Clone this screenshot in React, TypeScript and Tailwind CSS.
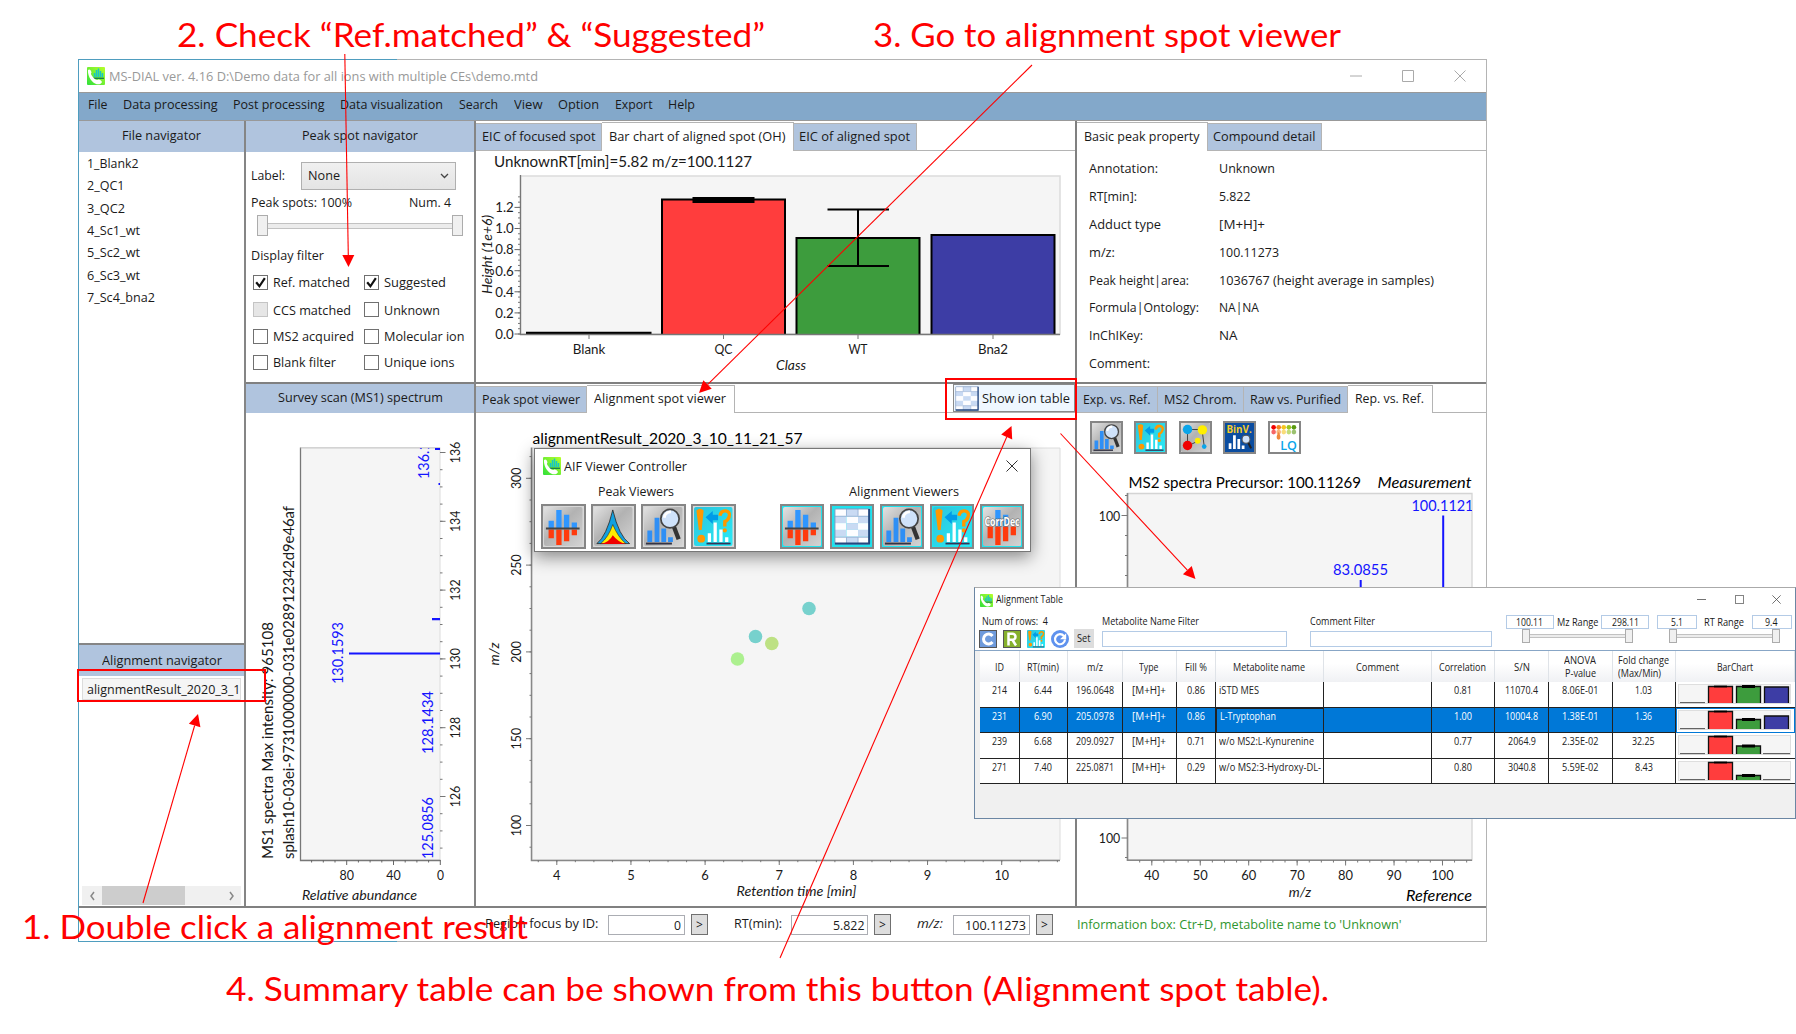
import { useLayoutEffect, useRef, type ReactNode } from 'react';

const UI = "font-['Open_Sans','Noto_Sans',sans-serif]";

/** Single line of text, condensed or widened to a given width. */
function T({ w, className = '', children }: { w: number; className?: string; children: ReactNode }) {
  const ref = useRef<HTMLSpanElement>(null);
  useLayoutEffect(() => {
    const el = ref.current;
    if (!el) return;
    el.style.transform = 'none';
    const natural = el.getBoundingClientRect().width;
    if (natural > 0) el.style.transform = `scaleX(${w / natural})`;
  }, [w, children]);
  return (
    <span className={`block shrink-0 ${className}`} style={{ width: w }}>
      <span ref={ref} className="inline-block origin-left whitespace-pre">
        {children}
      </span>
    </span>
  );
}

type STProps = {
  x: number;
  y: number;
  len: number;
  size?: number;
  rot?: boolean;
  italic?: boolean;
  fill?: string;
  anchor?: 'start' | 'middle' | 'end';
  children: ReactNode;
};

/** Chart label; y is the middle of its capitals. */
function ST({ x, y, len, size = 13.5, rot, italic, fill = '#1a1a1a', anchor = 'middle', children }: STProps) {
  return (
    <text
      x={x}
      y={y}
      dy=".36em"
      textLength={len}
      lengthAdjust="spacingAndGlyphs"
      fontSize={size}
      fontStyle={italic ? 'italic' : 'normal'}
      fill={fill}
      textAnchor={anchor}
      transform={rot ? `rotate(-90 ${x} ${y})` : undefined}
    >
      {children}
    </text>
  );
}

const range = (from: number, to: number, step: number) => {
  const out: number[] = [];
  for (let v = from; v <= to + 0.001; v += step) out.push(v);
  return out;
};

/* ---------- icons ---------- */

function Logo({ size }: { size: number }) {
  return (
    <svg width={size} height={size} viewBox="0 0 18 18" className="shrink-0">
      <defs>
        <linearGradient id="lg" x1="0" y1="1" x2="1" y2="0">
          <stop offset="0" stopColor="#2fe03a" />
          <stop offset="1" stopColor="#b8ff2a" />
        </linearGradient>
      </defs>
      <rect width="18" height="18" rx="1" fill="url(#lg)" />
      <path d="M7.5 10V6M9.5 10V3M11.5 10V1.5M13.5 10V4M15.5 10V6" stroke="#18c5c5" strokeWidth="1.5" />
      <path d="M6.5 11.3H17" stroke="#1a7f50" strokeWidth="1.4" />
      <path d="M1 3c1.500-1.500 3 0 3.500 2.500-1 1-.5 2 1 4s3 3.500 5 3.500c1.500-1 3.500 0 4.500 2-1 2.500-4 3-7 1.500C3.500 14 .5 8 1 3z" fill="#fff" />
    </svg>
  );
}

function Mirror() {
  return (
    <g>
      <path d="M7.500 14v8M15.500 3v19M23.500 8v14M31.500 16v6" stroke="#2f96ff" strokeWidth="5.500" />
      <path d="M7.500 23v9M15.500 23v16M23.500 23v12M31.500 23v6" stroke="#ff3a0c" strokeWidth="5.500" />
      <path d="M2 22h35" stroke="#444" strokeWidth="2" />
    </g>
  );
}

function Glass() {
  return (
    <g>
      <path d="M6 24v12M13.500 11v25M20.500 22v14M27.500 31v5" stroke="#2f8ff5" strokeWidth="5" />
      <path d="M2 37.500h27" stroke="#334" strokeWidth="2" />
      <path d="M31 20l5 13" stroke="#333" strokeWidth="4.500" />
      <circle cx="27" cy="12" r="9.500" fill="#cfe2fa" stroke="#444" strokeWidth="1.800" />
      <path d="M21 11a7 7 0 0 1 7-6" stroke="#fff" strokeWidth="3" fill="none" />
    </g>
  );
}

function Query() {
  return (
    <g>
      <path d="M2.500 3.500q4-3.500 7.500 0l-2 20h-3z" fill="#ff9800" />
      <circle cx="7.500" cy="32.500" r="4" fill="#ff9800" />
      <path d="M12 10.500l7.500-6.500v4H25v5.500h-5.500v4z" fill="#009be8" />
      <path d="M27 9q1-5.500 6-5 5 1 3.500 6-1 3.500-4.500 5v5" stroke="#ff9800" strokeWidth="3.500" fill="none" />
      <circle cx="32" cy="24" r="2.200" fill="#ff9800" />
      <path d="M16 27v9M22 16v20M28 23v13M34 31v5" stroke="#fff" strokeWidth="3.400" />
      <path d="M13 37.500h25" stroke="#335" strokeWidth="1.800" />
    </g>
  );
}

function Peaks() {
  return (
    <g>
      <path d="M3 37.500Q13 30 19.500 3 26 30 37 37.500z" fill="#12a0e0" stroke="#222" strokeWidth=".8" />
      <path d="M7 37.500Q15 31 19.500 18 25 31 33 37.500z" fill="#ffed00" stroke="#222" strokeWidth=".6" />
      <path d="M7 38Q16 36 19.500 29 25 36 33 38z" fill="#f00000" />
    </g>
  );
}

function Sheet() {
  const ys = [2, 9.5, 16.5, 23.5, 30.5, 38];
  const xs = [2, 14, 26, 38];
  const cells: ReactNode[] = [];
  for (let r = 0; r < 5; r++)
    for (let c = 0; c < 3; c++)
      cells.push(
        <rect
          key={`${r}-${c}`}
          x={xs[c]}
          y={ys[r]}
          width={xs[c + 1] - xs[c]}
          height={ys[r + 1] - ys[r]}
          fill={(r + c) % 2 ? '#c9daf3' : '#fdfdff'}
        />,
      );
  return (
    <g>
      {cells}
      <path d="M2 9.500h36M2 31h36M14 2v7M26 2v7M14 31v7M26 31v7" stroke="#9db4d6" strokeWidth="1" />
      <rect x="2" y="2" width="36" height="36" rx="1" fill="none" stroke="#7f98be" strokeWidth="1" />
      <path d="M37.500 2v35.500H2" fill="none" stroke="#24477f" strokeWidth="2" />
    </g>
  );
}

function Nodes() {
  return (
    <g>
      <path d="M9 9h20l3 23M9 9v23l14-7" stroke="#333" strokeWidth="1.200" fill="none" />
      <circle cx="9" cy="9" r="6.500" fill="#0aa5ea" />
      <circle cx="29.500" cy="9.500" r="6.500" fill="#ffef00" />
      <circle cx="9" cy="31" r="6.500" fill="#f00000" />
      <circle cx="23" cy="24.500" r="4" fill="#ffef00" />
      <circle cx="32" cy="32.500" r="3.200" fill="#0aa5ea" />
    </g>
  );
}

function BinV() {
  return (
    <g>
      <rect width="40" height="40" fill="#0b4da0" />
      <text x="2" y="14" fontSize="14" fontWeight="700" fill="#f5cc2a" textLength="35" lengthAdjust="spacingAndGlyphs">BinV.</text>
      <path d="M7 28v8M13 17v19M19 22v14M25 31v5" stroke="#fff" strokeWidth="3.800" />
      <path d="M32 27l4 8" stroke="#222" strokeWidth="3" />
      <circle cx="29" cy="22.500" r="5.500" fill="#cfe2fa" stroke="#555" strokeWidth="1.500" />
    </g>
  );
}

function LQ() {
  const cols = ['#f00000', '#f5831f', '#f5c51f', '#9ac51f', '#5a9a10'];
  return (
    <g>
      <rect width="40" height="40" fill="#fff" />
      {cols.map((c, i) => (
        <g key={c} fill={c}>
          <circle cx={5 + i * 7} cy="6" r="3.200" />
          <circle cx={5 + i * 7} cy="12.500" r="3.200" opacity=".6" />
        </g>
      ))}
      <path d="M12 12q-6 10 0 11 5-1 0-11z" fill="#f08a3c" />
      <text x="14" y="37" fontSize="17" fontWeight="600" fill="#0aa5ea" textLength="23" lengthAdjust="spacingAndGlyphs">LQ</text>
    </g>
  );
}

function CorrDec() {
  return (
    <g>
      <path d="M15.500 3v17M23.500 8v12" stroke="#2f96ff" strokeWidth="5.500" />
      <path d="M7.500 20v12M15.500 20v19M23.500 20v15M31.500 20v9" stroke="#ff3a0c" strokeWidth="5.500" />
      <text
        x="1.500"
        y="20"
        fontSize="12.500"
        fontWeight="700"
        fill="#fff"
        stroke="#666"
        strokeWidth="1.200"
        paintOrder="stroke"
        textLength="36.500"
        lengthAdjust="spacingAndGlyphs"
      >
        CorrDec
      </text>
    </g>
  );
}

function IconButton({ children, cyan, big }: { children: ReactNode; cyan?: boolean; big?: boolean }) {
  return (
    <span
      className={`flex shrink-0 items-center justify-center border-2 border-[#868686] ${big ? 'h-[45px] w-[44.500px]' : 'size-[33px]'} ${
        cyan ? 'bg-[#1fe3ee]' : 'bg-[#d8d8d8]'
      }`}
    >
      <svg viewBox="0 0 40 40" preserveAspectRatio="none" className={big ? 'h-[39px] w-[38.500px]' : 'size-[29px]'}>
        <defs>
          <linearGradient id="silver" x1="0" y1="0" x2="1" y2="1">
            <stop offset="0" stopColor="#e2e2e2" />
            <stop offset=".45" stopColor="#b2b2b2" />
            <stop offset="1" stopColor="#d4d4d4" />
          </linearGradient>
          <linearGradient id="aqua" x1="0" y1="0" x2="1" y2="1">
            <stop offset="0" stopColor="#2cc4dc" />
            <stop offset="1" stopColor="#2aeaf6" />
          </linearGradient>
        </defs>
        {children}
      </svg>
    </span>
  );
}

const Silver = () => <rect width="40" height="40" rx="2" fill="url(#silver)" />;
const Aqua = () => <rect width="40" height="40" rx="2" fill="url(#aqua)" />;

/* ---------- pieces ---------- */

function PaneHeader({ w, h, low, children }: { w: number; h: number; low?: boolean; children: string }) {
  return (
    <div className={`flex shrink-0 items-center justify-center bg-[#b0c4de] ${low ? 'pb-[2px]' : 'pb-[4px]'}`} style={{ height: h }}>
      <T w={w}>{children}</T>
    </div>
  );
}

type TabDef = { label: string; w: number; box: number; active?: boolean };

function Tabs({ tabs, children, h }: { tabs: TabDef[]; children?: ReactNode; h: number }) {
  return (
    <div className="flex shrink-0 items-end border-b border-[#b4b4b4]" style={{ height: h }}>
      {tabs.map((t) => (
        <div
          key={t.label}
          className={`flex items-center justify-center border-r border-t border-[#b4b4b4] ${
            t.active ? '-mb-px h-full bg-white pb-[3px]' : 'h-[calc(100%-2px)] bg-[#b0c4de] pb-[2px]'
          }`}
          style={{ width: t.box }}
        >
          <T w={t.w}>{t.label}</T>
        </div>
      ))}
      {children}
    </div>
  );
}

function Check({ label, w, on, off }: { label: string; w: number; on?: boolean; off?: boolean }) {
  return (
    <div className="flex items-center gap-[5.500px]">
      <span className={`flex size-[15px] shrink-0 items-center justify-center border ${off ? 'border-[#c4c4c4] bg-[#e6e6e6]' : 'border-[#707070] bg-white'}`}>
        {on && (
          <svg viewBox="0 0 12 12" className="size-[13px]">
            <path d="M2 5.800l3 3.700L10 2" fill="none" stroke="#111" strokeWidth="2" />
          </svg>
        )}
      </span>
      <T w={w}>{label}</T>
    </div>
  );
}

function Slider({ className, small }: { className: string; small?: boolean }) {
  const thumb = small ? 'h-[14px] w-[8px]' : 'h-[21px] w-[11px]';
  return (
    <div className={`flex items-center ${className}`}>
      <span className={`${thumb} shrink-0 border border-[#acacac] bg-[#f0f0f0]`} />
      <span className={`${small ? 'h-[4px]' : 'h-[6px]'} flex-1 border-y border-[#c2c2c2] bg-[#ececec]`} />
      <span className={`${thumb} shrink-0 border border-[#acacac] bg-[#f0f0f0]`} />
    </div>
  );
}

function WindowButtons({ gap, size, color }: { gap: number; size: number; color: string }) {
  return (
    <div className="flex items-center" style={{ gap }}>
      {['M0 6h12', 'M.5 .5h11v11h-11z', 'M.5 .5l11 11M11.500 .5l-11 11'].map((d) => (
        <svg key={d} width={size} height={size} viewBox="0 0 12 12" fill="none" stroke={color}>
          <path d={d} />
        </svg>
      ))}
    </div>
  );
}

/* ---------- charts ---------- */

const chart = "block shrink-0 font-['Lato',sans-serif]";

function BarChart() {
  const bars: [number, number, string][] = [
    [661, 199.5, '#ff3d3d'],
    [795.5, 238, '#3d9c3d'],
    [930.5, 235, '#3d3da5'],
  ];
  return (
    <svg width="599" height="231" viewBox="476 151 599 231" className={chart}>
      <ST x={494} y={161.500} len={258} size={15.500} anchor="start">UnknownRT[min]=5.82 m/z=100.1127</ST>
      <path d="M520.500 176H1060V334H520.500z" fill="#f5f5f5" stroke="#dcdcdc" strokeWidth="1.500" />
      {bars.map(([x, y, c]) => (
        <path key={x} d={`M${x + 1} 334V${y}H${x + 124}V334`} fill={c} stroke="#000" strokeWidth="2" />
      ))}
      <path d="M526 333H651.500" stroke="#000" strokeWidth="2.500" />
      <path d="M692.500 200H754.500" stroke="#000" strokeWidth="6" />
      <path d="M827.500 209.500H889M827.500 266H889M858 209.500V266" stroke="#000" strokeWidth="2" />
      <path d="M520.500 175V334.500H1060" fill="none" stroke="#777" strokeWidth="1.300" />
      {range(0, 6, 1).map((i) => (
        <g key={i}>
          <path d={`M514.500 ${334 - i * 21.1}h6`} stroke="#666" />
          <ST x={504.500} y={334 - i * 21.1} len={18.500}>{(i * 0.2).toFixed(1)}</ST>
        </g>
      ))}
      {range(0, 26, 1).map((i) => (
        <path key={i} d={`M518 ${334 - i * 5.275}h2.500`} stroke="#777" />
      ))}
      <ST x={486.500} y={254.500} len={79} rot italic size={14}>Height (1e+6)</ST>
      {([[589, 'Blank', 32.5], [723.5, 'QC', 18], [858, 'WT', 19], [993, 'Bna2', 30]] as [number, string, number][]).map(([x, l, w]) => (
        <g key={l}>
          <path d={`M${x} 334v5`} stroke="#777" />
          <ST x={x} y={349} len={w}>{l}</ST>
        </g>
      ))}
      <ST x={791} y={365.500} len={30} italic>Class</ST>
    </svg>
  );
}

function SurveyChart() {
  return (
    <svg width="228" height="493" viewBox="246 413 228 493" className={chart}>
      <clipPath id="sc"><rect x="300" y="448" width="140" height="412" /></clipPath>
      <rect x="300.500" y="448" width="139.500" height="412" fill="#f5f5f5" stroke="#dcdcdc" />
      <path d="M300.500 447.500V860.500H440.500" fill="none" stroke="#777" strokeWidth="1.300" />
      <path d="M300.500 447.800H440" stroke="#c8c8c8" />
      <ST x={267.500} y={740.500} len={237} size={15.500} rot>MS1 spectra Max intensity: 965108</ST>
      <ST x={288} y={682.500} len={353} size={15.500} rot>splash10-03ei-9731000000-031e028912342d9e46af</ST>
      <g clipPath="url(#sc)">
        <ST x={423.500} y={479} len={62} size={15} rot anchor="start" fill="#1414ff">136.1121</ST>
        <path d="M435 449H440M349 653.500H440M432 619.200H440M438.500 484h2" stroke="#1414ff" strokeWidth="2.200" />
      </g>
      <ST x={337.500} y={653} len={62} size={15} rot fill="#1414ff">130.1593</ST>
      <ST x={427.500} y={722.500} len={63} size={15} rot fill="#1414ff">128.1434</ST>
      <ST x={427.500} y={828} len={62} size={15} rot fill="#1414ff">125.0856</ST>
      {range(0, 5, 1).map((i) => (
        <g key={i}>
          <path d={`M440 ${452.5 + i * 68.8}h5.500`} stroke="#777" />
          <ST x={455} y={452.5 + i * 68.8} len={21.500} rot>{136 - i * 2}</ST>
        </g>
      ))}
      {range(0, 23, 1).map((i) => (
        <path key={i} d={`M440 ${452.5 + i * 17.2}h2.500`} stroke="#777" />
      ))}
      {range(0, 11, 1).map((i) => (
        <path key={i} d={`M${440.3 - i * 11.7} 860v${i % 4 ? 2.5 : 5}`} stroke="#666" />
      ))}
      <ST x={346.800} y={875.500} len={14.500}>80</ST>
      <ST x={393.500} y={875.500} len={14.500}>40</ST>
      <ST x={440.500} y={875.500} len={7}>0</ST>
      <ST x={359.500} y={895.500} len={115} italic>Relative abundance</ST>
    </svg>
  );
}

function ScatterChart() {
  return (
    <svg width="599" height="493" viewBox="476 413 599 493" className={chart}>
      <path d="M532 448H1060V860H532z" fill="#f5f5f5" stroke="#dcdcdc" />
      <path d="M531.500 447.500V860.500H1060" fill="none" stroke="#888" strokeWidth="1.500" />
      <ST x={532.500} y={438.500} len={270} size={15.500} anchor="start" fill="#000">alignmentResult_2020_3_10_11_21_57</ST>
      {range(0, 4, 1).map((i) => (
        <g key={i}>
          <path d={`M526 ${825.5 - i * 86.8}h5.500`} stroke="#777" />
          <ST x={516} y={825.5 - i * 86.8} len={21.500} rot>{100 + i * 50}</ST>
        </g>
      ))}
      {range(-1, 17, 1).map((i) => (
        <path key={i} d={`M529.500 ${825.5 - i * 21.7}h2`} stroke="#777" />
      ))}
      {range(0, 6, 1).map((i) => (
        <g key={i}>
          <path d={`M${556.8 + i * 74.15} 860v5`} stroke="#777" />
          <ST x={556.8 + i * 74.15} y={875} len={i === 6 ? 14.5 : 7.5}>{4 + i}</ST>
        </g>
      ))}
      {range(-1, 27, 1).map((i) => (
        <path key={i} d={`M${556.8 + i * 18.54} 860v2.200`} stroke="#777" />
      ))}
      <ST x={494.500} y={654} len={23} rot italic>m/z</ST>
      <ST x={796.500} y={891.500} len={120} italic>Retention time [min]</ST>
      <circle cx="809" cy="608.500" r="6.800" fill="#77d1cd" />
      <circle cx="755.500" cy="636.500" r="6.800" fill="#77d1cd" />
      <circle cx="771.800" cy="643.500" r="6.800" fill="#bde183" />
      <circle cx="737.500" cy="659" r="6.800" fill="#acf08f" />
    </svg>
  );
}

function Ms2Chart() {
  return (
    <svg width="409" height="446" viewBox="1077 460 409 446" className={chart}>
      <clipPath id="ms2"><rect x="1127" y="493" width="345" height="367" /></clipPath>
      <path d="M1127.500 493.500H1472V860H1127.500z" fill="#f5f5f5" stroke="#d4d4d4" strokeWidth="1.300" />
      <path d="M1127.500 493V860.300H1472" fill="none" stroke="#888" strokeWidth="1.600" />
      <ST x={1128.500} y={482.500} len={232.500} size={15.500} anchor="start" fill="#000">MS2 spectra Precursor: 100.11269</ST>
      <ST x={1377.500} y={482.500} len={94} size={15.500} anchor="start" italic fill="#000">Measurement</ST>
      <ST x={1109.500} y={516} len={21.500}>100</ST>
      <ST x={1109.500} y={838} len={21.500}>100</ST>
      <path d="M1121.500 515.500h6M1125 495.500h2.500M1125 535.500h2.500M1125 555.500h2.500M1125 575.500h2.500M1121.500 838h6M1125 857.500h2.500" stroke="#777" />
      <g clipPath="url(#ms2)">
        <ST x={1411.500} y={506} len={62} size={15} anchor="start" fill="#1414ff">100.1121</ST>
      </g>
      <ST x={1360.500} y={570} len={55} size={15} fill="#1414ff">83.0855</ST>
      <path d="M1443.200 515.500V600M1360.700 580V600" stroke="#1414ff" strokeWidth="2" />
      {range(0, 6, 1).map((i) => (
        <g key={i}>
          <path d={`M${1151.8 + i * 48.45} 860v5.500`} stroke="#777" />
          <ST x={1151.8 + i * 48.45} y={875.500} len={i === 6 ? 22 : 15}>{40 + i * 10}</ST>
        </g>
      ))}
      {range(-1, 26, 1).map((i) => (
        <path key={i} d={`M${1151.8 + i * 12.11} 860v2.500`} stroke="#777" />
      ))}
      <ST x={1300} y={892} len={22.500} italic>m/z</ST>
      <ST x={1406} y={895.500} len={66} size={15.500} anchor="start" italic fill="#000">Reference</ST>
    </svg>
  );
}

/* ---------- panes ---------- */

const menu: [string, number][] = [
  ['File', 19.5], ['Data processing', 94.5], ['Post processing', 91.5], ['Data visualization', 103], ['Search', 39],
  ['View', 28.5], ['Option', 41], ['Export', 37.5], ['Help', 27],
];

const files: [string, number][] = [
  ['1_Blank2', 51.5], ['2_QC1', 37.5], ['3_QC2', 38], ['4_Sc1_wt', 53], ['5_Sc2_wt', 53], ['6_Sc3_wt', 53], ['7_Sc4_bna2', 68],
];

const props: [string, number, string, number][] = [
  ['Annotation:', 69, 'Unknown', 56], ['RT[min]:', 48, '5.822', 31.5], ['Adduct type', 72, '[M+H]+', 46], ['m/z:', 26, '100.11273', 60],
  ['Peak height|area:', 100, '1036767 (height average in samples)', 215], ['Formula|Ontology:', 110, 'NA|NA', 40],
  ['InChIKey:', 54, 'NA', 18.5], ['Comment:', 61, '', 0],
];

function Chevron({ d }: { d: string }) {
  return (
    <svg width="7" height="10" viewBox="0 0 7 10" fill="none" stroke="currentColor" strokeWidth="1.500"><path d={d} /></svg>
  );
}

function LeftPane() {
  return (
    <div className="flex w-[165px] shrink-0 flex-col">
      <PaneHeader w={79} h={31}>File navigator</PaneHeader>
      <div className="flex flex-1 flex-col pl-[8px]">
        {files.map(([f, w]) => (
          <div key={f} className="flex h-[22.300px] items-center"><T w={w}>{f}</T></div>
        ))}
      </div>
      <div className="h-[2px] shrink-0 bg-[#858585]" />
      <PaneHeader w={120} h={31} low>Alignment navigator</PaneHeader>
      <div className="flex h-[230px] shrink-0 flex-col px-[3px] pb-px pt-[2px]">
        <div className="flex h-[22px] items-center overflow-hidden border border-[#dcdcdc] bg-[#f5f5f5] pl-[4px]">
          <T w={153.500}>alignmentResult_2020_3_1</T>
        </div>
        <div className="mt-auto flex h-[19px] bg-[#f0f0f0] text-[#888]">
          <span className="flex w-[20px] items-center justify-center"><Chevron d="M5 1L2 5l3 4" /></span>
          <span className="w-[83px] bg-[#cdcdcd]" />
          <span className="ml-auto flex w-[20px] items-center justify-center"><Chevron d="M2 1l3 4-3 4" /></span>
        </div>
      </div>
    </div>
  );
}

function FilterPane() {
  return (
    <div className="flex w-[228px] shrink-0 flex-col">
      <PaneHeader w={116} h={31}>Peak spot navigator</PaneHeader>
      <div className="flex h-[230px] shrink-0 flex-col pl-[5px] pt-[9.500px]">
        <div className="flex h-[28px] items-center">
          <T w={34} className="pb-px">Label:</T>
          <div className="ml-[16px] flex h-[28px] w-[155px] items-center justify-between border border-[#b0b0b0] bg-linear-to-b from-[#f0f0f0] to-[#e4e4e4] pl-[6px] pr-[6px]">
            <T w={32} className="pb-px">None</T>
            <svg width="9" height="6" viewBox="0 0 9 6" fill="none" stroke="#444" strokeWidth="1.300"><path d="M1 1l3.500 3.500L8 1" /></svg>
          </div>
        </div>
        <div className="mt-[2.500px] flex h-[20px] items-center justify-between pr-[23px]">
          <T w={101}>Peak spots: 100%</T>
          <T w={42}>Num. 4</T>
        </div>
        <Slider className="ml-[6px] mt-[3px] w-[206px]" />
        <div className="mt-[9px] flex h-[20px] items-center"><T w={73}>Display filter</T></div>
        <div className="mt-[3px] grid h-[108px] grid-cols-[111px_1fr] grid-rows-[28px_27px_26px_26px] items-center pl-[1.500px]">
          <Check label="Ref. matched" w={77} on />
          <Check label="Suggested" w={62} on />
          <Check label="CCS matched" w={78} off />
          <Check label="Unknown" w={56} />
          <Check label="MS2 acquired" w={81} />
          <Check label="Molecular ion" w={80.5} />
          <Check label="Blank filter" w={63} />
          <Check label="Unique ions" w={70.5} />
        </div>
      </div>
      <div className="h-[2px] shrink-0 bg-[#808080]" />
      <PaneHeader w={165} h={29}>Survey scan (MS1) spectrum</PaneHeader>
      <SurveyChart />
    </div>
  );
}

function CenterPane() {
  return (
    <div className="flex w-[599px] shrink-0 flex-col">
      <Tabs
        h={30}
        tabs={[
          { label: 'EIC of focused spot', w: 113.5, box: 126 },
          { label: 'Bar chart of aligned spot (OH)', w: 176.5, box: 192, active: true },
          { label: 'EIC of aligned spot', w: 111, box: 122.5 },
        ]}
      />
      <BarChart />
      <div className="h-[2px] shrink-0 bg-[#808080]" />
      <Tabs
        h={29}
        tabs={[
          { label: 'Peak spot viewer', w: 98, box: 110.5 },
          { label: 'Alignment spot viewer', w: 132, box: 148.5, active: true },
        ]}
      >
        <div className="ml-auto flex h-[28px] w-[122px] items-center gap-[2.500px] border border-[#8a8a8a] bg-[#eff7ff] pl-px">
          <svg width="24" height="25" viewBox="1 1 38 38" preserveAspectRatio="none"><Sheet /></svg>
          <T w={88}>Show ion table</T>
        </div>
      </Tabs>
      <ScatterChart />
    </div>
  );
}

function RightPane() {
  return (
    <div className="flex w-[409px] shrink-0 flex-col">
      <Tabs
        h={30}
        tabs={[
          { label: 'Basic peak property', w: 115.5, box: 130.5, active: true },
          { label: 'Compound detail', w: 102.5, box: 114 },
        ]}
      />
      <div className="flex h-[231px] shrink-0 flex-col pl-[12px] pt-[3px]">
        {props.map(([l, lw, v, vw]) => (
          <div key={l} className="grid h-[27.900px] grid-cols-[130px_1fr] items-center">
            <T w={lw}>{l}</T>
            {v && <T w={vw}>{v}</T>}
          </div>
        ))}
      </div>
      <div className="h-[2px] shrink-0 bg-[#808080]" />
      <Tabs
        h={29}
        tabs={[
          { label: 'Exp. vs. Ref.', w: 67.5, box: 81 },
          { label: 'MS2 Chrom.', w: 72.5, box: 86 },
          { label: 'Raw vs. Purified', w: 91, box: 103.5 },
          { label: 'Rep. vs. Ref.', w: 69, box: 85.5, active: true },
        ]}
      />
      <div className="flex h-[47px] shrink-0 gap-[11.500px] pl-[12.500px] pt-[8px]">
        <IconButton><Silver /><Glass /></IconButton>
        <IconButton cyan><Aqua /><Query /></IconButton>
        <IconButton><Silver /><Nodes /></IconButton>
        <IconButton><BinV /></IconButton>
        <IconButton><LQ /></IconButton>
      </div>
      <Ms2Chart />
    </div>
  );
}

function Field({ value, w }: { value: string; w: number }) {
  return (
    <>
      <span className="flex h-[20px] w-[77.500px] items-center justify-end border border-[#abadb3] bg-white pr-[3px] pt-px">
        <T w={w}>{value}</T>
      </span>
      <span className="ml-[6px] flex h-[21px] w-[17px] items-center justify-center border border-[#707070] bg-[#dddddd] text-[12px]">&gt;</span>
    </>
  );
}

function MainWindow() {
  return (
    <div className="absolute left-[78px] top-[59px] flex h-[883px] w-[1409px] flex-col border border-[#b4b4b4] border-l-[#4f9dbf] bg-white">
      <span className="absolute -left-px -top-px h-px w-[319px] bg-[#4f9dbf]" />
      <span className="absolute -bottom-px -left-px h-px w-[319px] bg-[#4f9dbf]" />
      <div className="flex h-[32px] shrink-0 items-center pl-[8px] pr-[20px] text-[#999]">
        <Logo size={18} />
        <T w={429} className="ml-[3.500px]">MS-DIAL ver. 4.16 D:\Demo data for all ions with multiple CEs\demo.mtd</T>
        <div className="ml-auto"><WindowButtons gap={40} size={12} color="#aaa" /></div>
      </div>
      <div className="flex h-[29px] shrink-0 items-center gap-[15.800px] border-y border-[#999] bg-[#83a8ca] pb-[6px] pl-[8.500px]">
        {menu.map(([m, w]) => <T key={m} w={w}>{m}</T>)}
      </div>
      <div className="flex h-[785px] shrink-0">
        <LeftPane />
        <div className="w-[2px] bg-[#858585]" />
        <FilterPane />
        <div className="w-[2px] bg-[#858585]" />
        <CenterPane />
        <div className="w-[2px] bg-[#808080]" />
        <RightPane />
      </div>
      <div className="h-[2px] shrink-0 bg-[#808080]" />
      <div className="flex flex-1 items-center pl-[406px]">
        <T w={113.5} className="pb-[3px]">Region focus by ID:</T>
        <span className="w-[9px]" />
        <Field value="0" w={7} />
        <T w={48} className="ml-[25.500px] pb-[3px]">RT(min):</T>
        <span className="w-[9px]" />
        <Field value="5.822" w={31.5} />
        <T w={26} className="ml-[26px] pb-[3px] italic">m/z:</T>
        <span className="w-[9.500px]" />
        <Field value="100.11273" w={61} />
        <T w={324.5} className="ml-[23.500px] pb-px text-[#2f962f]">Information box: Ctr+D, metabolite name to 'Unknown'</T>
      </div>
    </div>
  );
}

function ControllerDialog() {
  return (
    <div className="absolute left-[534px] top-[448px] flex h-[104px] w-[497px] flex-col border border-[#777] bg-white shadow-[0_5px_16px_rgba(0,0,0,0.45)]">
      <div className="flex h-[34px] items-center pl-[8px] pr-[12px]">
        <Logo size={18} />
        <T w={123} className="ml-[3px]">AIF Viewer Controller</T>
        <svg className="ml-auto" width="12" height="12" viewBox="0 0 12 12" stroke="#333"><path d="M.5 .5l11 11M11.500 .5l-11 11" /></svg>
      </div>
      <div className="flex pl-[6px]">
        <div className="flex w-[238.500px] flex-col">
          <T w={76} className="ml-[57px] -mt-px h-[22px]">Peak Viewers</T>
          <div className="flex gap-[5.500px]">
            <IconButton big><Silver /><Mirror /></IconButton>
            <IconButton big><Silver /><Peaks /></IconButton>
            <IconButton big><Silver /><Glass /></IconButton>
            <IconButton big><Aqua /><Query /></IconButton>
          </div>
        </div>
        <div className="flex flex-col">
          <T w={110} className="ml-[69px] -mt-px h-[22px]">Alignment Viewers</T>
          <div className="flex gap-[5.600px]">
            <IconButton big cyan><Silver /><Mirror /></IconButton>
            <IconButton big cyan><Sheet /></IconButton>
            <IconButton big cyan><Silver /><Glass /></IconButton>
            <IconButton big cyan><Aqua /><Query /></IconButton>
            <IconButton big cyan><Silver /><CorrDec /></IconButton>
          </div>
        </div>
      </div>
    </div>
  );
}

/* ---------- alignment table ---------- */

const gridCols = 'grid-cols-[39.500px_48px_55px_54px_39px_108px_108px_63.500px_54px_63.500px_63px_119px]';

const heads: [string, number][][] = [
  [['ID', 9]], [['RT(min)', 32]], [['m/z', 16]], [['Type', 19.5]], [['Fill %', 22]], [['Metabolite name', 72]], [['Comment', 43]],
  [['Correlation', 47]], [['S/N', 16]], [['ANOVA', 32], ['P-value', 31]], [['Fold change', 51], ['(Max/Min)', 43]], [['BarChart', 36]],
];

const widths = [15, 18, 38, 34, 18, 0, 0, 18, 0, 36.5, 0];

type Row = { cells: string[]; nameW: number; snW: number; foldW: number; bars: [number, number, number]; sel?: boolean };
const rows: Row[] = [
  { cells: ['214', '6.44', '196.0648', '[M+H]+', '0.86', 'iSTD MES', '', '0.81', '11070.4', '8.06E-01', '1.03'], nameW: 40, snW: 33, foldW: 17, bars: [16.5, 16.5, 16] },
  { cells: ['231', '6.90', '205.0978', '[M+H]+', '0.86', 'L-Tryptophan', '', '1.00', '10004.8', '1.38E-01', '1.36'], nameW: 56, snW: 33, foldW: 17, bars: [17.5, 9.5, 13], sel: true },
  { cells: ['239', '6.68', '209.0927', '[M+H]+', '0.71', 'w/o MS2:L-Kynurenine', '', '0.77', '2064.9', '2.35E-02', '32.25'], nameW: 95, snW: 28, foldW: 22.5, bars: [17.5, 8, 0] },
  { cells: ['271', '7.40', '225.0871', '[M+H]+', '0.29', 'w/o MS2:3-Hydroxy-DL-', '', '0.80', '3040.8', '5.59E-02', '8.43'], nameW: 102, snW: 28, foldW: 18, bars: [17.5, 4.5, 0] },
];

function MiniBars({ bars }: { bars: [number, number, number] }) {
  const fills = ['#ff3d3d', '#3d9c3d', '#3d3da5'];
  return (
    <svg width="114" height="20" viewBox="0 0 114 20" className="block">
      <rect x=".5" y=".5" width="112" height="19" fill="#f5f5f5" stroke="#dedede" />
      <path d="M2 18.600h25" stroke="#555" />
      {bars.map((h, i) =>
        h > 0 ? (
          <path key={i} d={`M${30.5 + i * 28} 19V${19 - h}H${54.5 + i * 28}V19`} fill={fills[i]} stroke="#111" strokeWidth="1.300" />
        ) : (
          <path key={i} d={`M${29 + i * 28} 18.600h27`} stroke="#555" />
        ),
      )}
      {bars.slice(0, 2).map((h, i) => (
        <path key={i} d={`M${36 + i * 28} ${19 - h}h13`} stroke="#000" strokeWidth={i ? 3 : 1.8} />
      ))}
    </svg>
  );
}

function Box({ w, box, children }: { w: number; box: number; children: string }) {
  return (
    <span className="flex h-[14px] shrink-0 items-center justify-center border border-[#b4cbe6]" style={{ width: box }}>
      <T w={w}>{children}</T>
    </span>
  );
}

function TableWindow() {
  return (
    <div className="absolute left-[974px] top-[587px] flex h-[232px] w-[822px] flex-col border border-[#6b86a3] border-t-[#aaa] bg-white text-[10.500px] leading-[13px]">
      <div className="flex h-[24px] shrink-0 items-center pl-[5px] pr-[14px]">
        <Logo size={13} />
        <T w={67} className="ml-[3px] pb-px">Alignment Table</T>
        <div className="ml-auto pb-px"><WindowButtons gap={28.5} size={9} color="#444" /></div>
      </div>
      <div className="flex h-[38px] shrink-0 pl-[5px]">
        <div className="w-[121.500px] pt-[3px]">
          <T w={66} className="ml-[2px]">Num of rows:  4</T>
          <div className="-ml-px mt-px flex items-center gap-[6px]">
            <svg width="18" height="18" viewBox="0 0 18 18"><rect width="18" height="18" fill="#555" /><rect x="1" y="1" width="16" height="16" fill="#6f9bdc" /><path d="M13.500 6A5 5 0 1 0 13.500 12" fill="none" stroke="#fff" strokeWidth="3" /></svg>
            <svg width="18" height="18" viewBox="0 0 18 18"><rect width="18" height="18" fill="#555" /><rect x="1" y="1" width="16" height="16" fill="#86b02c" /><path d="M5.500 15.500V3.800H9.500a2.900 2.900 0 0 1 0 6H6M9.500 10l3.500 5.500" fill="none" stroke="#fff" strokeWidth="2.500" /></svg>
            <svg width="18" height="18" viewBox="0 0 40 40"><Aqua /><Query /></svg>
            <svg width="18" height="18" viewBox="0 0 18 18"><circle cx="9" cy="9" r="9" fill="#5f92ee" /><path d="M13 6.200A5 5 0 1 0 14 9.500" fill="none" stroke="#fff" strokeWidth="2.200" /><path d="M15.200 3.200v6H9z" fill="#fff" /></svg>
            <span className="-ml-px flex h-[19px] w-[20px] items-center justify-center bg-[#ddd]"><T w={13.5}>Set</T></span>
          </div>
        </div>
        <div className="w-[208px] pt-[3px]">
          <T w={97}>Metabolite Name Filter</T>
          <div className="mt-[3px] h-[16px] w-[185px] border border-[#b4cbe6]" />
        </div>
        <div className="w-[196px] pt-[3px]">
          <T w={65}>Comment Filter</T>
          <div className="mt-[3px] h-[16px] w-[182px] border border-[#b4cbe6]" />
        </div>
        <div className="w-[151px] pt-[3px]">
          <div className="flex items-center gap-[3px]">
            <Box w={27} box={48}>100.11</Box>
            <T w={41.5}>Mz Range</T>
            <Box w={27} box={48}>298.11</Box>
          </div>
          <Slider small className="ml-[16px] w-[111px]" />
        </div>
        <div className="pt-[3px]">
          <div className="flex items-center gap-[7.500px]">
            <Box w={12} box={40}>5.1</Box>
            <T w={40}>RT Range</T>
            <Box w={12.5} box={40}>9.4</Box>
          </div>
          <Slider small className="ml-[12px] w-[111px]" />
        </div>
      </div>
      <div className="flex flex-1 flex-col overflow-hidden border-t border-[#88a6c6] bg-[#f0f0f0] pl-[5px] text-[#222]">
        <div className={`grid h-[31px] shrink-0 ${gridCols} bg-linear-to-b from-white from-40% to-[#f0f1f4]`}>
          {heads.map((lines, i) => (
            <div key={i} className="flex flex-col justify-center border-r border-[#dfe3e8] pt-px">
              <div className={`mx-auto flex flex-col ${i === 10 ? 'items-start' : 'items-center'}`}>
                {lines.map(([l, w]) => <T key={l} w={w}>{l}</T>)}
              </div>
            </div>
          ))}
        </div>
        {rows.map((r) => (
          <div key={r.cells[0]} className={`grid h-[25.500px] shrink-0 ${gridCols} ${r.sel ? 'bg-[#0078d7] text-white' : 'bg-white'}`}>
            {r.cells.map((c, i) => {
              const w = i === 5 ? r.nameW : i === 8 ? r.snW : i === 10 ? r.foldW : widths[i];
              return (
                <div
                  key={i}
                  className={`flex border-b border-r border-[#222] ${i === 5 ? 'justify-start pl-[3px]' : 'justify-center'} ${
                    r.sel && i === 5 ? 'border-l border-t pt-px' : 'pt-[2px]'
                  }`}
                >
                  {c && <T w={w}>{c}</T>}
                </div>
              );
            })}
            <div className={`flex items-center ${r.sel ? 'border border-[#0078d7] bg-white pl-px' : 'border-b border-[#222] pl-[2px]'}`}>
              <MiniBars bars={r.bars} />
            </div>
          </div>
        ))}
      </div>
    </div>
  );
}

/* ---------- annotations ---------- */

function Arrow({ from, to }: { from: [number, number]; to: [number, number] }) {
  const a = Math.atan2(to[1] - from[1], to[0] - from[0]);
  const bx = to[0] - Math.cos(a) * 12;
  const by = to[1] - Math.sin(a) * 12;
  const nx = -Math.sin(a) * 6;
  const ny = Math.cos(a) * 6;
  return (
    <g>
      <path d={`M${from[0]} ${from[1]}L${bx} ${by}`} stroke="#f00" strokeWidth="1.100" />
      <path d={`M${to[0]} ${to[1]}L${bx + nx} ${by + ny}L${bx - nx} ${by - ny}z`} fill="#f00" />
    </g>
  );
}

function Note({ pos, w, children }: { pos: string; w: number; children: string }) {
  return (
    <div className={`absolute font-['Lato',sans-serif] text-[33px] leading-[40px] text-[#f00] ${pos}`}>
      <T w={w}>{children}</T>
    </div>
  );
}

export default function App() {
  return (
    <div className={`relative h-[1034px] w-[1796px] overflow-hidden bg-white text-[13.500px] leading-[18px] text-[#1a1a1a] ${UI}`}>
      <MainWindow />
      <ControllerDialog />
      <TableWindow />
      <div className="absolute left-[77px] top-[669px] h-[33px] w-[189px] border-2 border-[#f00]" />
      <div className="absolute left-[945px] top-[378px] h-[42px] w-[132px] border-2 border-[#f00]" />
      <svg className="absolute left-0 top-0" width="1796" height="1034" viewBox="0 0 1796 1034">
        <Arrow from={[143, 903]} to={[198, 714]} />
        <Arrow from={[344.8, 54]} to={[348.5, 267]} />
        <Arrow from={[1032, 65]} to={[699, 393]} />
        <Arrow from={[780, 958]} to={[1011.5, 426]} />
        <Arrow from={[1060.5, 433.5]} to={[1195.5, 579]} />
      </svg>
      <Note pos="left-[177px] top-[14px]" w={588}>2. Check “Ref.matched” &amp; “Suggested”</Note>
      <Note pos="left-[873px] top-[14px]" w={468}>3. Go to alignment spot viewer</Note>
      <Note pos="left-[22px] top-[906px]" w={506}>1. Double click a alignment result</Note>
      <Note pos="left-[226px] top-[968px]" w={1103}>4. Summary table can be shown from this button (Alignment spot table).</Note>
    </div>
  );
}
